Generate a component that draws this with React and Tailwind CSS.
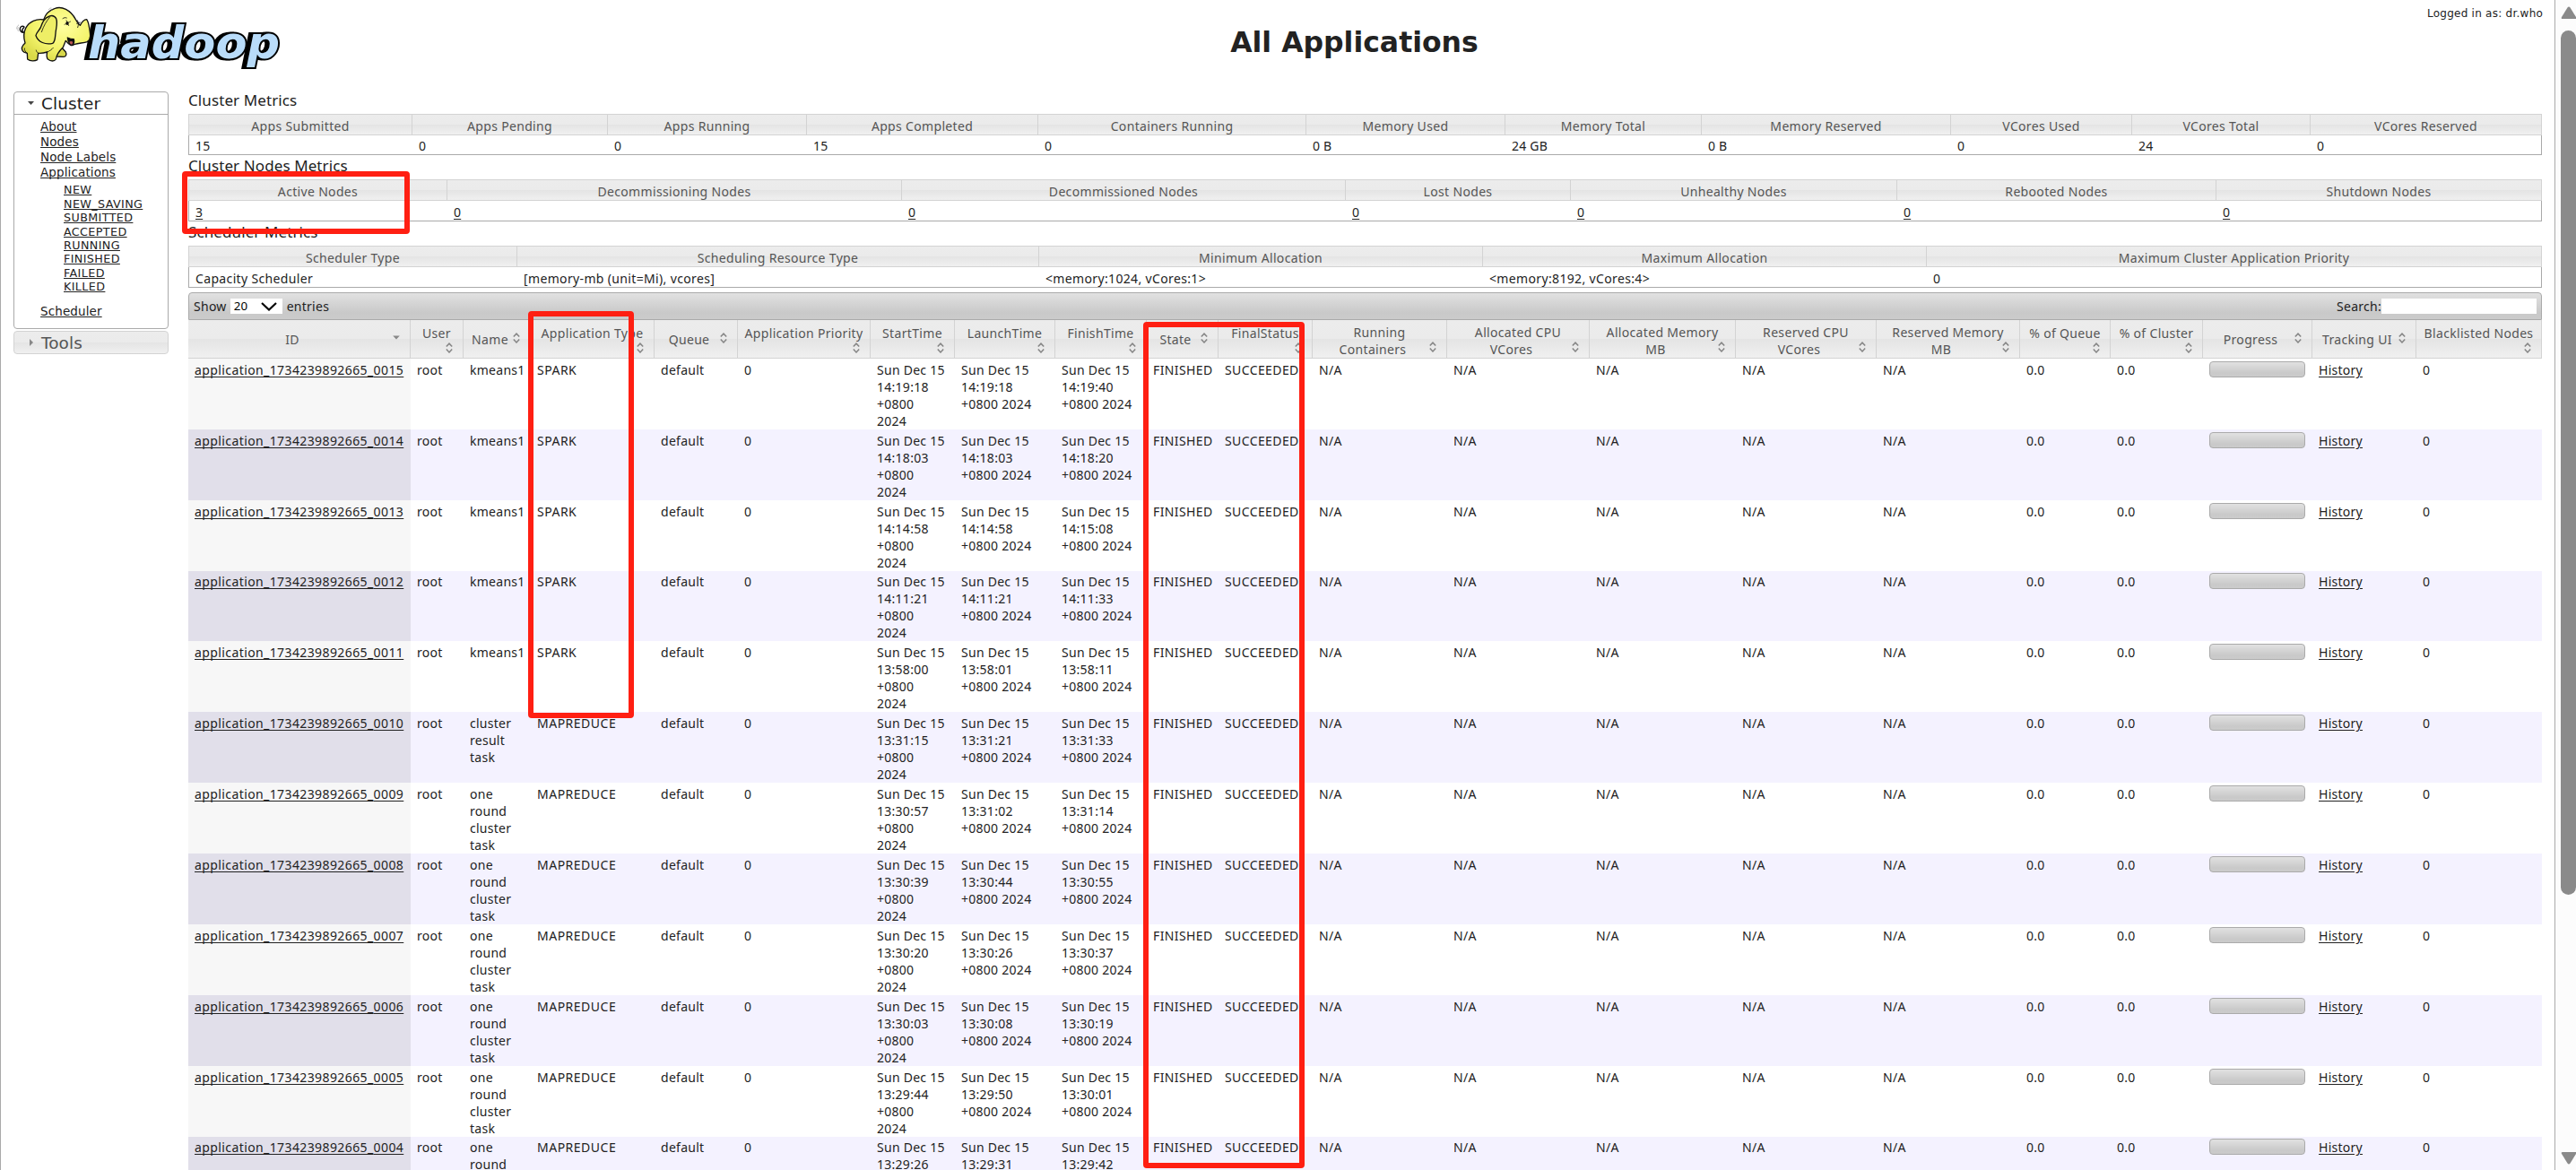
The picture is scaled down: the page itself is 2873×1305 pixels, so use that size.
import React from "react";

const GLASS = "bg-[linear-gradient(#ececec_0%,#ebebeb_49%,#e4e4e4_50%,#f0f0f0_100%)]";
const HILITE = "bg-[linear-gradient(#e1e1e1_0%,#c9c9c9_75%,#cbcbcb_100%)]";

function columns(edges) {
  return edges.slice(1).map((e, i) => `${e - edges[i]}px`).join(" ");
}

const CLUSTER = {
  title: "Cluster Metrics",
  edges: [211, 460, 678, 900, 1158, 1457, 1679, 1898, 2176, 2378, 2577, 2835],
  heads: ["Apps Submitted", "Apps Pending", "Apps Running", "Apps Completed", "Containers Running", "Memory Used", "Memory Total", "Memory Reserved", "VCores Used", "VCores Total", "VCores Reserved"],
  values: ["15", "0", "0", "15", "0", "0 B", "24 GB", "0 B", "0", "24", "0"],
};
const NODES = {
  title: "Cluster Nodes Metrics",
  edges: [211, 499, 1006, 1501, 1752, 2116, 2472, 2835],
  heads: ["Active Nodes", "Decommissioning Nodes", "Decommissioned Nodes", "Lost Nodes", "Unhealthy Nodes", "Rebooted Nodes", "Shutdown Nodes"],
  values: ["3", "0", "0", "0", "0", "0", "0"],
};
const SCHEDULER = {
  title: "Scheduler Metrics",
  edges: [211, 577, 1159, 1654, 2149, 2835],
  heads: ["Scheduler Type", "Scheduling Resource Type", "Minimum Allocation", "Maximum Allocation", "Maximum Cluster Application Priority"],
  values: ["Capacity Scheduler", "[memory-mb (unit=Mi), vcores]", "<memory:1024, vCores:1>", "<memory:8192, vCores:4>", "0"],
};

const APP_EDGES = [210, 458, 517, 592, 730, 823, 971, 1065, 1177, 1279, 1359, 1464, 1614, 1773, 1936, 2093, 2253, 2354, 2457, 2579, 2695, 2835];

/* mode: "inline" keeps the arrows beside the label, "below" drops them to a second line */
const APP_HEADS = [
  { lines: ["ID"], mode: "inline", sorted: true },
  { lines: ["User"], mode: "below" },
  { lines: ["Name"], mode: "inline" },
  { lines: ["Application Type"], mode: "below" },
  { lines: ["Queue"], mode: "inline" },
  { lines: ["Application Priority"], mode: "below" },
  { lines: ["StartTime"], mode: "below" },
  { lines: ["LaunchTime"], mode: "below" },
  { lines: ["FinishTime"], mode: "below" },
  { lines: ["State"], mode: "inline" },
  { lines: ["FinalStatus"], mode: "below" },
  { lines: ["Running", "Containers"], mode: "double" },
  { lines: ["Allocated CPU", "VCores"], mode: "double" },
  { lines: ["Allocated Memory", "MB"], mode: "double" },
  { lines: ["Reserved CPU", "VCores"], mode: "double" },
  { lines: ["Reserved Memory", "MB"], mode: "double" },
  { lines: ["% of Queue"], mode: "below" },
  { lines: ["% of Cluster"], mode: "below" },
  { lines: ["Progress"], mode: "inline" },
  { lines: ["Tracking UI"], mode: "inline" },
  { lines: ["Blacklisted Nodes"], mode: "below" },
];

const K = ["kmeans1"];
const ONE = ["one", "round", "cluster", "task"];
const APPS = [
  ["0015", K, "SPARK", "14:19:18", "14:19:18", "14:19:40"],
  ["0014", K, "SPARK", "14:18:03", "14:18:03", "14:18:20"],
  ["0013", K, "SPARK", "14:14:58", "14:14:58", "14:15:08"],
  ["0012", K, "SPARK", "14:11:21", "14:11:21", "14:11:33"],
  ["0011", K, "SPARK", "13:58:00", "13:58:01", "13:58:11"],
  ["0010", ["cluster", "result", "task"], "MAPREDUCE", "13:31:15", "13:31:21", "13:31:33"],
  ["0009", ONE, "MAPREDUCE", "13:30:57", "13:31:02", "13:31:14"],
  ["0008", ONE, "MAPREDUCE", "13:30:39", "13:30:44", "13:30:55"],
  ["0007", ONE, "MAPREDUCE", "13:30:20", "13:30:26", "13:30:37"],
  ["0006", ONE, "MAPREDUCE", "13:30:03", "13:30:08", "13:30:19"],
  ["0005", ONE, "MAPREDUCE", "13:29:44", "13:29:50", "13:30:01"],
  ["0004", ONE, "MAPREDUCE", "13:29:26", "13:29:31", "13:29:42"],
];

function Lines({ items, limit }) {
  return items.slice(0, limit).map((t) => (
    <div key={t} className="whitespace-nowrap">{t}</div>
  ));
}

function MetricsTable({ data, titleClass, valueClass, link }) {
  const template = { gridTemplateColumns: columns(data.edges) };
  return (
    <section>
      <h2 className={`text-[17px] leading-[23px] tracking-[0.1px] text-[#222] ${titleClass}`}>{data.title}</h2>
      <div className={`grid h-[24px] border-y border-l border-[#d3d3d3] text-center tracking-[0.33px] text-[#555] ${GLASS}`} style={template}>
        {data.heads.map((h) => (
          <div key={h} className="border-r border-[#d3d3d3] pt-[3px]">{h}</div>
        ))}
      </div>
      <div className={`grid border-x border-b border-[#aaa] ${valueClass}`} style={template}>
        {data.values.map((v, i) => (
          <div key={i} className="whitespace-nowrap pl-[7px]">
            {link ? <a className="underline underline-offset-2">{v}</a> : v}
          </div>
        ))}
      </div>
    </section>
  );
}

function SortArrows({ sorted, className }) {
  return (
    <svg className={`absolute right-[10px] h-[12px] w-[10px] ${className}`} viewBox="0 0 10 12" fill="none" stroke="#858585" strokeWidth="1.5">
      {sorted ? <path d="M1.2 3.5h7.6L5 7.6z" fill="#888" stroke="none" /> : <path d="M1.8 4.6L5 1.2l3.2 3.4M1.8 7.6L5 11l3.2-3.4" />}
    </svg>
  );
}

function HeadCell({ head }) {
  const { lines, mode, sorted } = head;
  const pad = mode === "inline" ? "pt-[12px]" : mode === "below" ? "pt-[5px]" : "pt-[4px]";
  const icon = mode === "inline" ? "top-[14px]" : mode === "below" ? "top-[25px]" : "top-[24px]";
  return (
    <div className={`relative flex flex-col items-center border-r border-[#d3d3d3] ${pad}`}>
      {lines.map((l, i) => (
        <div key={l} className={`whitespace-nowrap ${mode === "inline" || i === 1 ? "pr-[15px]" : ""}`}>{l}</div>
      ))}
      <SortArrows sorted={sorted} className={icon} />
    </div>
  );
}

function AppRow({ app, index }) {
  const [id, name, type, start, launch, finish] = app;
  const even = index % 2 === 1;
  const high = index === 3 || index === 11;
  const limit = index === 11 ? 2 : 4;
  const cell = `pl-[7px] whitespace-nowrap ${high ? "pt-[2px]" : "pt-[3px]"}`;
  return (
    <div
      className={`grid ${index === 3 ? "h-[78px]" : "h-[79px]"} tracking-[0.27px] ${even ? "bg-[#f4f2ff]" : "bg-white"}`}
      style={{ gridTemplateColumns: columns(APP_EDGES) }}
    >
      <div className={`${cell} tracking-[0.4px] ${even ? "bg-[#e1dfea]" : "bg-[#f7f7f7]"}`}>
        <a className="underline underline-offset-2 [text-decoration-skip-ink:none]">application_1734239892665_{id}</a>
      </div>
      <div className={cell}>root</div>
      <div className={cell}><Lines items={name} limit={limit} /></div>
      <div className={`${cell} tracking-[0.5px]`}>{type}</div>
      <div className={cell}>default</div>
      <div className={cell}>0</div>
      <div className={cell}><Lines items={["Sun Dec 15", start, "+0800", "2024"]} limit={limit} /></div>
      <div className={cell}><Lines items={["Sun Dec 15", launch, "+0800 2024"]} limit={limit} /></div>
      <div className={cell}><Lines items={["Sun Dec 15", finish, "+0800 2024"]} limit={limit} /></div>
      <div className={`${cell} tracking-[0.4px]`}>FINISHED</div>
      <div className={`${cell} tracking-[0.4px]`}>SUCCEEDED</div>
      <div className={cell}>N/A</div>
      <div className={cell}>N/A</div>
      <div className={cell}>N/A</div>
      <div className={cell}>N/A</div>
      <div className={cell}>N/A</div>
      <div className={cell}>0.0</div>
      <div className={cell}>0.0</div>
      <div className={cell}>
        <div className={`h-[18px] w-[107px] rounded-[4px] border border-[#aaa] ${HILITE}`} />
      </div>
      <div className={cell}><a className="underline underline-offset-2">History</a></div>
      <div className={cell}>0</div>
    </div>
  );
}

function Elephant() {
  return (
    <g strokeLinejoin="round" strokeLinecap="round" stroke="#111" strokeWidth="4">
      <path d="M52 108c-9 2-16-3-15-12 1-8 9-11 14-6M50 92c-5 5-8 9-4 13" fill="none" strokeWidth="4.5" />
      <path d="M168 150l22 24c4 8 1 16-8 16l-24-1z" fill="#d8d84a" />
      <path d="M116 66C92 62 68 72 56 94c-10 20-7 34-2 50-9 8-14 18-8 27 4 6 10 6 15 7l1 20c9 7 25 7 33 2l3-22c11 1 21-1 30-4-2 10-4 17 2 24 10 8 22 8 27 0 2-13 9-26 24-40l9-22c11 14 20 20 30 12 14-4 30-4 42-8 14-8 10-28 7-46-2-14-4-22-9-29-10 1-17 10-22 20-8-6-10-13-15-20C206 32 176 20 154 28c-18 6-32 18-38 38z" fill="url(#hide)" />
      <path d="M136 54c-18 6-24 20-30 38-6 12-15 18-16 27 8 22 32 32 56 26 9-5 8-20 10-33 1-18 8-34 2-50-6-10-14-11-22-8z" fill="#eeee66" />
      <path d="M137 57c-12 14-20 28-28 50M61 178c-6-5-10-9-9-16M98 178c-5-3-6-6-7-10M128 174c8-3 15-8 20-14M180 62c4-3 8-4 13-2M229 68c5 8 4 15 1 24M238 75l-11 4" fill="none" strokeWidth="2.5" />
      <path d="M196 126c8 4 14 5 21 5 2 8 1 15-5 20-8-1-14-8-16-25z" fill="#111" />
      <path d="M202 140c5-3 9-2 12 1l-3 8c-4 0-7-4-9-9z" fill="#b55" stroke="none" />
      <ellipse cx="195" cy="78" rx="5" ry="6" fill="#111" stroke="none" />
      <path d="M186 82l20-10M192 68l8 18" strokeWidth="2" />
      <path d="M133 32c1-3 4-5 8-5M138 38c1-3 4-4 7-5M26 96c0-5 2-9 6-12M31 104c-2-4-2-8 0-12" fill="none" strokeWidth="1.5" stroke="#777" />
    </g>
  );
}

function Logo() {
  const word = {
    x: 98, y: 64.5, fontSize: 50, textLength: 214, lengthAdjust: "spacingAndGlyphs",
    fontFamily: "DejaVu Sans", fontWeight: 700, fontStyle: "italic",
  };
  return (
    <svg className="h-[98px] w-[313px] shrink-0 overflow-visible" viewBox="1 0 313 98">
      <defs>
        <radialGradient id="hide" cx="0.6" cy="0.35" r="0.7">
          <stop offset="0" stopColor="#ffffa0" />
          <stop offset="0.6" stopColor="#f4f46c" />
          <stop offset="1" stopColor="#dada48" />
        </radialGradient>
      </defs>
      <text {...word} x={94.5} y={65} fill="#000" stroke="#000" strokeWidth="4" aria-hidden="true">hadoop</text>
      <text {...word} fill="#b9dcfa" stroke="#000" strokeWidth="4" paintOrder="stroke">hadoop</text>
      <g transform="translate(10 0) scale(0.3333)"><Elephant /></g>
    </svg>
  );
}

const NAV_TOP = ["About", "Nodes", "Node Labels", "Applications"];
const NAV_STATES = ["NEW", "NEW_SAVING", "SUBMITTED", "ACCEPTED", "RUNNING", "FINISHED", "FAILED", "KILLED"];

function Sidebar() {
  return (
    <nav className="ml-[14px] mt-[4px] w-[173px] shrink-0 text-[13.5px] tracking-[0.12px] text-[#222] [font-family:Verdana,'DejaVu_Sans',sans-serif] [text-decoration-skip-ink:none]">
      <div className="h-[265px] rounded-[4px] border border-[#aaa]">
        <div className="flex h-[25px] items-center border-b border-[#aaa] pl-[15px] text-[18.4px] text-[#212121]">
          <svg className="mr-[8px] h-[8px] w-[7px]" viewBox="0 0 7 8"><path d="M0 2h7L3.5 6z" fill="#454545" /></svg>
          Cluster
        </div>
        <ul className="pl-[29px] pt-[5px] leading-[17.1px]">
          {NAV_TOP.map((n) => <li key={n}><a className="underline">{n}</a></li>)}
        </ul>
        <ul className="pl-[55px] pt-[3px] text-[12.7px] leading-[15.4px] tracking-[0.4px]">
          {NAV_STATES.map((n) => <li key={n}><a className="underline">{n}</a></li>)}
        </ul>
        <div className="pl-[29px] pt-[11px] leading-[17px]"><a className="underline">Scheduler</a></div>
      </div>
      <div className={`mt-[2px] flex h-[26px] items-center rounded-[4px] border border-[#d3d3d3] pl-[15px] text-[18.4px] text-[#555] ${GLASS}`}>
        <svg className="mr-[8px] h-[8px] w-[7px]" viewBox="0 0 7 8"><path d="M2 0v8L6 4z" fill="#888" /></svg>
        Tools
      </div>
    </nav>
  );
}

function Toolbar() {
  return (
    <div className={`mt-[5px] flex h-[31px] items-center justify-between rounded-t-[4px] border border-[#aaa] px-[5px] tracking-[0.27px] text-[#222] ${HILITE}`}>
      <div className="flex items-center">
        Show
        <span className="ml-[4px] mr-[5px] flex h-[17px] w-[58px] items-center justify-between bg-white pl-[4px] pr-[6px] text-[13.3px] text-black">
          20
          <svg className="h-[10px] w-[18px]" viewBox="0 0 18 10" fill="none" stroke="#000" strokeWidth="2.2"><path d="M1 1l8 7.5L17 1" /></svg>
        </span>
        entries
      </div>
      <div className="flex items-center">
        Search:
        <span className="h-[17px] w-[173px] bg-white" />
      </div>
    </div>
  );
}

export default function App() {
  return (
    <div className="relative flex h-[1305px] w-[2873px] overflow-hidden bg-white text-[14px] leading-[19px] tracking-[0.2px] text-[#222] [font-family:'Noto_Sans',sans-serif]">
      <div className="w-[2850px] shrink-0 border-x border-[#aaa]">
        <header className="flex h-[98px] tracking-normal [font-family:Verdana,'DejaVu_Sans',sans-serif]">
          <Logo />
          <h1 className="flex-1 pt-[27px] text-center text-[31.5px] font-bold leading-[40px] text-[#222]">All Applications</h1>
          <div className="w-[142px] whitespace-nowrap pr-[15px] pt-[6px] text-right text-[12px] tracking-[0.25px]">Logged in as: dr.who</div>
        </header>
        <div className="flex">
          <Sidebar />
          <main className="ml-[22px] w-[2625px] shrink-0">
            <MetricsTable data={CLUSTER} titleClass="h-[29px] pt-[2px]" valueClass="h-[22px] pt-[2px]" />
            <MetricsTable data={NODES} titleClass="h-[27px]" valueClass="h-[23px] pt-[3px]" link />
            <MetricsTable data={SCHEDULER} titleClass="h-[27px]" valueClass="h-[23px] pt-[3px] tracking-[0.35px]" />
            <Toolbar />
            <div className={`grid h-[43px] border-b border-[#d3d3d3] tracking-[0.33px] text-[#555] ${GLASS}`} style={{ gridTemplateColumns: columns(APP_EDGES) }}>
              {APP_HEADS.map((h) => <HeadCell key={h.lines.join(" ")} head={h} />)}
            </div>
            {APPS.map((a, i) => <AppRow key={a[0]} app={a} index={i} />)}
          </main>
        </div>
      </div>
      <aside className="flex h-full flex-1 flex-col items-end bg-[#fcfcfc]">
        <svg className="mt-[6px] h-[16px] w-[17px]" viewBox="0 0 17 16"><path d="M1 13L7.5 2.5Q9 .5 10.500 2.500L17 13v2H2Q0 15 1 13z" fill="#8a8a8a" /></svg>
        <div className="mt-[12px] h-[964px] w-[17px] rounded-[9px] bg-[#8a8a8a]" />
        <svg className="mt-[287px] h-[15px] w-[17px]" viewBox="0 0 17 15"><path d="M1 2L7.500 12.500Q9 14.500 10.500 12.500L17 2V0H2Q0 0 1 2z" fill="#8a8a8a" /></svg>
      </aside>
      <div className="absolute left-[203px] top-[191px] h-[70px] w-[254px] rounded-[4px] border-[6px] border-[#ff1f12]" />
      <div className="absolute left-[589px] top-[347px] h-[454px] w-[118px] rounded-[4px] border-[6px] border-[#ff1f12]" />
      <div className="absolute left-[1275px] top-[359px] h-[944px] w-[180px] rounded-[4px] border-[6px] border-[#ff1f12]" />
    </div>
  );
}
